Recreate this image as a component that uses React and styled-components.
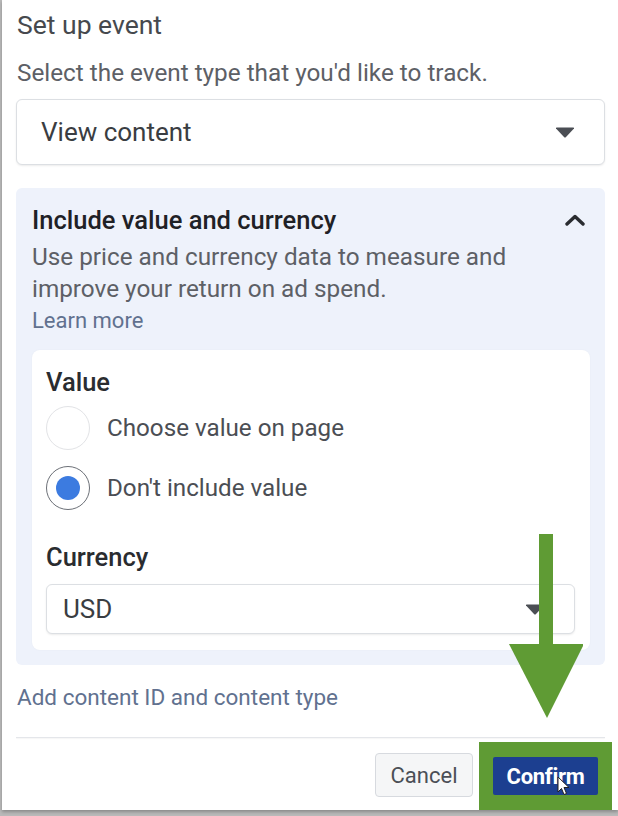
import React from "react";
import styled, { createGlobalStyle } from "styled-components";

const Global = createGlobalStyle`
  html, body { margin: 0; padding: 0; }
  body {
    background: #b9b9b9;
    font-family: Roboto, "Liberation Sans", Arial, sans-serif;
    width: 618px;
    height: 816px;
    overflow: hidden;
  }
`;

const Dialog = styled.div`
  position: relative;
  margin-left: 2px;
  width: 616px;
  height: 810px;
  background: #ffffff;
  box-sizing: border-box;
  padding: 0 13px 0 14px;
  display: flex;
  flex-direction: column;
  box-shadow: 0 2px 3px rgba(0, 0, 0, 0.25);
`;

const Title = styled.div`
  margin-top: 10px;
  font-size: 26.5px;
  line-height: 30px;
  color: #46494e;
  padding-left: 1px;
`;

const Subtitle = styled.div`
  margin-top: 18px;
  font-size: 24.3px;
  line-height: 30px;
  color: #5d6066;
  padding-left: 1px;
`;

const Select = styled.div`
  margin-top: ${(p) => p.$mt}px;
  height: ${(p) => p.$h}px;
  box-sizing: border-box;
  border: 1px solid #dcdfe3;
  border-radius: 6px;
  background: #fff;
  box-shadow: 0 1px 2px rgba(0, 0, 0, 0.08);
  display: flex;
  align-items: center;
  justify-content: space-between;
  padding: 0 29px 0 ${(p) => p.$pl}px;
  font-size: 26px;
  color: #3a3d42;
`;

const Caret = styled.svg`
  width: 20px;
  height: 11px;
  flex: none;
`;

const Panel = styled.div`
  margin-top: 23px;
  background: #eef2fb;
  border-radius: 6px;
  padding: 16px 15px 15px 16px;
  display: flex;
  flex-direction: column;
`;

const PanelHeader = styled.div`
  display: flex;
  align-items: center;
  justify-content: space-between;
  height: 32px;
  font-size: 25.5px;
  font-weight: 500;
  color: #1f2126;
  padding-right: 5px;
`;

const Desc = styled.div`
  margin-top: 5px;
  font-size: 24.3px;
  line-height: 32px;
  color: #5d6066;
`;

const LinkText = styled.div`
  font-size: ${(p) => p.$fs || 22}px;
  line-height: 32px;
  color: #61718f;
  margin-top: ${(p) => p.$mt || 0}px;
  padding-left: ${(p) => p.$pl || 0}px;
`;

const Card = styled.div`
  margin-top: 13px;
  background: #ffffff;
  border-radius: 8px;
  padding: 16px 15px 16px 14px;
  display: flex;
  flex-direction: column;
  box-shadow: 0 0 2px rgba(0, 0, 0, 0.04);
`;

const Label = styled.div`
  font-size: 25.5px;
  font-weight: 500;
  line-height: 32px;
  color: #2a2c30;
  margin-top: ${(p) => p.$mt || 0}px;
`;

const RadioRow = styled.div`
  display: flex;
  align-items: center;
  gap: 17px;
  height: 44px;
  margin-top: ${(p) => p.$mt}px;
  font-size: 24.2px;
  color: #4b4e54;
`;

const RadioCircle = styled.div`
  width: 44px;
  height: 44px;
  box-sizing: border-box;
  border-radius: 50%;
  border: 1px solid ${(p) => (p.$checked ? "#6c7077" : "#e2e3e6")};
  background: #fff;
  display: flex;
  align-items: center;
  justify-content: center;
  flex: none;
`;

const Dot = styled.div`
  width: 24px;
  height: 24px;
  border-radius: 50%;
  background: #3c7be0;
`;

const Divider = styled.div`
  margin-top: 24px;
  height: 1px;
  background: #e4e6ea;
  box-shadow: 0 1px 1px rgba(0, 0, 0, 0.04);
`;

const Footer = styled.div`
  margin-top: 4px;
  margin-right: -7px;
  display: flex;
  justify-content: flex-end;
  align-items: center;
  gap: 6px;
`;

const CancelButton = styled.button`
  width: 98px;
  height: 44px;
  box-sizing: border-box;
  border: 1px solid #d7dadf;
  border-radius: 4px;
  background: #f5f6f7;
  font-family: Roboto, "Liberation Sans", Arial, sans-serif;
  font-size: 22px;
  color: #4b4f56;
  padding: 0;
  margin-top: -2px;
`;

const Highlight = styled.div`
  background: #5f9b34;
  padding: 15px 14px 15px 14px;
  display: flex;
`;

const ConfirmButton = styled.button`
  position: relative;
  width: 105px;
  height: 38px;
  border: none;
  border-radius: 2px;
  background: #1c3f90;
  color: #ffffff;
  font-family: Roboto, "Liberation Sans", Arial, sans-serif;
  font-weight: 700;
  font-size: 22px;
  padding: 0;
  letter-spacing: -0.3px;
`;

const Cursor = styled.svg`
  position: absolute;
  left: 64px;
  top: 19px;
  width: 14px;
  height: 20px;
`;

const Arrow = styled.svg`
  position: absolute;
  left: 505px;
  top: 534px;
  width: 76px;
  height: 184px;
`;

const CaretIcon = () => (
  <Caret viewBox="0 0 20 11">
    <path d="M1 1.5 Q0.5 0.5 2 0.5 L18 0.5 Q19.5 0.5 19 1.5 L11 10 Q10 11 9 10 Z" fill="#4b4e54" />
  </Caret>
);

const Chevron = () => (
  <svg width="20" height="12" viewBox="0 0 20 12">
    <path d="M2 10 L10 2.5 L18 10" fill="none" stroke="#2a2c30" strokeWidth="3.4" strokeLinecap="round" strokeLinejoin="round" />
  </svg>
);

export default function App() {
  return (
    <>
      <Global />
      <Dialog>
        <Title>Set up event</Title>
        <Subtitle>Select the event type that you'd like to track.</Subtitle>
        <Select $mt={11} $h={66} $pl={24}>
          <span>View content</span>
          <CaretIcon />
        </Select>
        <Panel>
          <PanelHeader>
            <span>Include value and currency</span>
            <Chevron />
          </PanelHeader>
          <Desc>
            Use price and currency data to measure and
            <br />
            improve your return on ad spend.
          </Desc>
          <LinkText>Learn more</LinkText>
          <Card>
            <Label>Value</Label>
            <RadioRow $mt={8}>
              <RadioCircle />
              <span>Choose value on page</span>
            </RadioRow>
            <RadioRow $mt={16}>
              <RadioCircle $checked>
                <Dot />
              </RadioCircle>
              <span>Don't include value</span>
            </RadioRow>
            <Label $mt={31}>Currency</Label>
            <Select $mt={11} $h={50} $pl={16}>
              <span>USD</span>
              <CaretIcon />
            </Select>
          </Card>
        </Panel>
        <LinkText $mt={16} $pl={1} $fs={22.5}>Add content ID and content type</LinkText>
        <Divider />
        <Footer>
          <CancelButton>Cancel</CancelButton>
          <Highlight>
            <ConfirmButton>
              Confirm
              <Cursor viewBox="0 0 14 20">
                <path d="M1 1 L1 16 L4.5 12.5 L7 18.5 L9.5 17.5 L7 11.5 L12 11.5 Z" fill="#ffffff" stroke="#222" strokeWidth="1" strokeLinejoin="round" />
              </Cursor>
            </ConfirmButton>
          </Highlight>
        </Footer>
        <Arrow viewBox="0 0 76 184">
          <rect x="32" y="0" width="14" height="112" fill="#5f9b34" />
          <polygon points="2,110 77,110 40,184" fill="#5f9b34" />
        </Arrow>
      </Dialog>
    </>
  );
}
